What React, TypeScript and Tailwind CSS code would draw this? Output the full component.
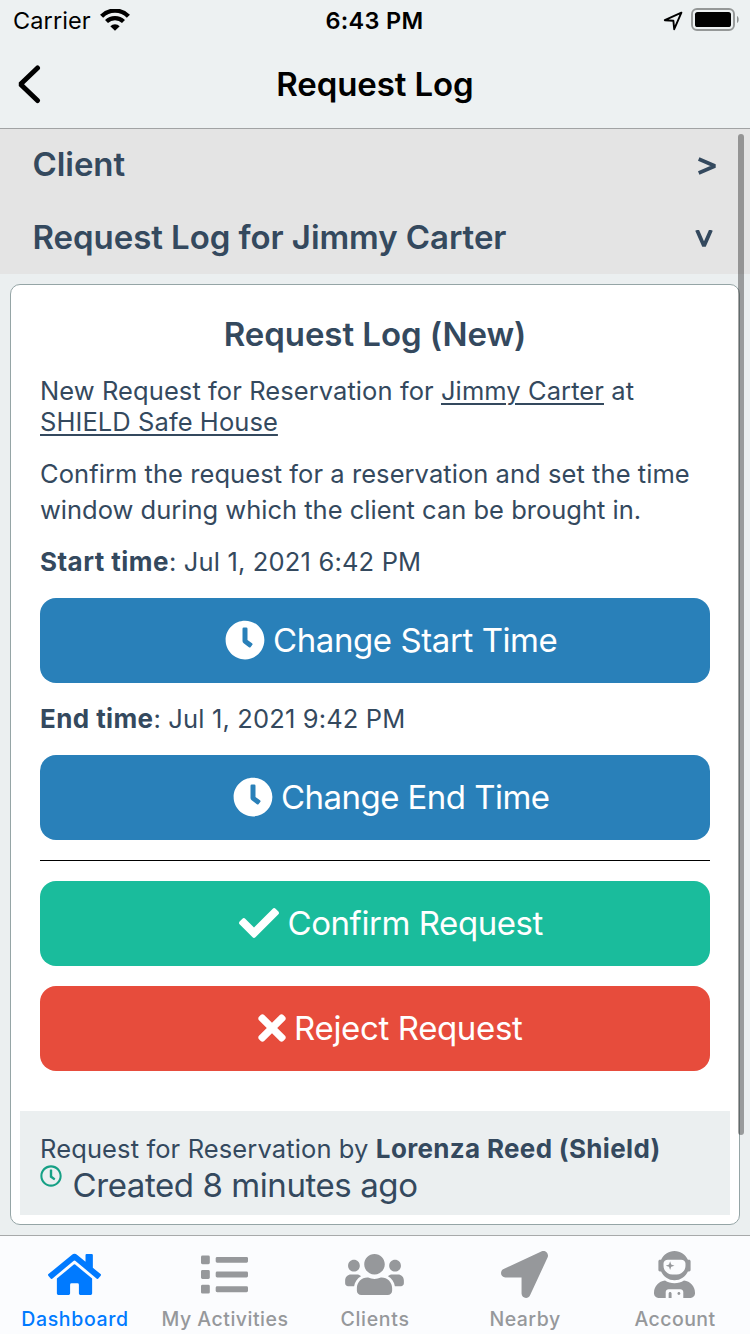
import type { ReactNode } from 'react';
import {
  FaCheck,
  FaClock,
  FaHome,
  FaList,
  FaLocationArrow,
  FaRegClock,
  FaTimes,
  FaUserAstronaut,
  FaUsers,
} from 'react-icons/fa';

function WifiIcon() {
  return (
    <svg className="h-[22px] w-[30px]" viewBox="0 0 30 22" fill="none" stroke="#000">
      <path d="M1.6 7.2a19 19 0 0 1 26.8 0" strokeWidth="4.4" />
      <path d="M6.5 12.6a12 12 0 0 1 17 0" strokeWidth="4.2" />
      <path d="M10.3 17.2a6.8 6.8 0 0 1 9.4 0L15 21.8z" fill="#000" stroke="none" />
    </svg>
  );
}

function BatteryIcon() {
  return (
    <svg className="h-[24px] w-[49px]" viewBox="0 0 49 24">
      <rect x="1" y="1" width="42" height="21" rx="5" fill="none" stroke="#959898" strokeWidth="1.9" />
      <rect x="4" y="4" width="36" height="15" rx="2.6" />
      <path d="M46 8c2.2.6 2.2 6.4 0 7z" fill="#8e9191" />
    </svg>
  );
}

function StatusBar() {
  return (
    <div className="grid h-[40px] grid-cols-3 items-center pl-[13px] text-[23.5px] leading-[38px]">
      <div className="flex items-center gap-[9px]">
        <span className="pt-[2px] tracking-[0.1px]">Carrier</span>
        <WifiIcon />
      </div>
      <div className="pt-[2px] pr-[14px] text-center font-semibold tracking-[0.3px]">6:43 PM</div>
      <div className="flex items-center justify-end gap-[8px] pr-[10px]">
        <svg className="mt-[2px] h-[20px] w-[20px]" viewBox="0 0 20 20" fill="none" stroke="#000" strokeWidth="1.9" strokeLinejoin="round">
          <path d="M18.4 1.6 1.8 9.2 10.4 9.8 11.2 18.2z" />
        </svg>
        <BatteryIcon />
      </div>
    </div>
  );
}

function Header() {
  return (
    <header className="h-[129px] shrink-0 border-b border-[#a1a3a4] bg-[#edf1f2] text-black">
      <StatusBar />
      <div className="grid h-[88px] grid-cols-[60px_1fr_60px] items-center">
        <svg className="ml-[15.5px] h-[40px] w-[26px]" viewBox="0 0 26 40" fill="none" stroke="#000" strokeWidth="5" strokeLinecap="round" strokeLinejoin="bevel">
          <path d="M21.500 4 4.500 20.200 21.500 36.500" />
        </svg>
        <h1 className="pt-[2px] text-center text-[33px] font-semibold tracking-[-0.1px]">Request Log</h1>
      </div>
    </header>
  );
}

function SectionRow({ title, marker }: { title: string; marker: ReactNode }) {
  return (
    <div className="flex h-[73px] items-center justify-between pr-[34px] pb-[2px] pl-[32.5px] text-[33px] font-semibold tracking-[-0.06px]">
      <span>{title}</span>
      {marker}
    </div>
  );
}

function ActionButton({ color, children }: { color: string; children: ReactNode }) {
  return (
    <button className={`flex h-[85px] w-full items-center justify-center gap-[8.5px] rounded-[16px] pl-[32px] text-[33px] text-white ${color}`}>
      {children}
    </button>
  );
}

function Tab({ icon, label, className }: { icon: ReactNode; label: string; className: string }) {
  return (
    <div className={`flex w-[150px] flex-col items-center pt-[15px] text-[19.5px] leading-[24px] font-[450] ${className}`}>
      <div className="mb-[9px] flex h-[47px] items-center pr-[2px]">{icon}</div>
      {label}
    </div>
  );
}

export default function App() {
  return (
    <div className="relative flex h-[1334px] w-[750px] flex-col overflow-hidden bg-[#ebeff0] font-['Inter',sans-serif] text-[#34495e]">
      <Header />

      <div className="h-[145px] shrink-0 bg-[#e4e4e4]">
        <SectionRow
          title="Client"
          marker={
            <svg className="mt-[3px] mr-[-1.5px] h-[18px] w-[20px]" viewBox="0 0 20 18" fill="none" stroke="#34495e" strokeWidth="3.6">
              <path d="M.7 2 17 9 .7 16" strokeLinejoin="bevel" />
            </svg>
          }
        />
        <SectionRow
          title="Request Log for Jimmy Carter"
          marker={
            <svg className="mt-[2px] mr-[3px] h-[18px] w-[18px]" viewBox="0 0 18 18" fill="none" stroke="#34495e" strokeWidth="3.8">
              <path d="M2 0 9 16 16 0" strokeLinejoin="bevel" />
            </svg>
          }
        />
      </div>

      <main className="mx-[10px] mt-[10px] flex h-[941px] shrink-0 flex-col rounded-[10px] border border-[#95a5a6] bg-white text-[25.5px]">
        <div className="px-[29px] pt-[27px]">
          <h2 className="text-center text-[33px] leading-[44px] font-semibold tracking-[-0.05px]">Request Log (New)</h2>
          <p className="mt-[19px] leading-[31px] tracking-[0.08px]">
            New Request for Reservation for{' '}
            <span className="underline decoration-2 underline-offset-[3px]">Jimmy Carter</span> at
            <br />
            <span className="underline decoration-2 underline-offset-[3px]">SHIELD Safe House</span>
          </p>
          <p className="mt-[19px] leading-[36px] whitespace-nowrap tracking-[0.06px]">
            Confirm the request for a reservation and set the time
            <br />
            <span className="tracking-[0px]">window during which the client can be brought in.</span>
          </p>
          <p className="mt-[16px] leading-[36px] tracking-[0.17px]">
            <b className="text-[26px] tracking-[0.46px]">Start time</b>: Jul 1, 2021 6:42 PM
          </p>
          <div className="mt-[18px]">
            <ActionButton color="bg-[#2980b9]">
              <FaClock className="mb-[2px] size-[40px]" />
              <span className="tracking-[-0.42px]">Change Start Time</span>
            </ActionButton>
          </div>
          <p className="mt-[18px] leading-[36px] tracking-[0.15px]">
            <b className="text-[26px] tracking-[0.4px]">End time</b>: Jul 1, 2021 9:42 PM
          </p>
          <div className="mt-[18px]">
            <ActionButton color="bg-[#2980b9]">
              <FaClock className="mb-[2px] size-[40px]" />
              <span className="tracking-[-0.55px]">Change End Time</span>
            </ActionButton>
          </div>
          <hr className="my-[20px] border-t border-black" />
          <div className="flex flex-col gap-[20px]">
            <ActionButton color="bg-[#1abc9c]">
              <FaCheck className="mb-[2px] size-[40px]" />
              <span className="tracking-[-0.43px]">Confirm Request</span>
            </ActionButton>
            <ActionButton color="bg-[#e74c3c]">
              <FaTimes className="mb-[2px] -ml-[2px] h-[40px] w-[28px]" />
              <span className="tracking-[-0.36px]">Reject Request</span>
            </ActionButton>
          </div>
        </div>
        <div className="mx-[9px] mt-[40px] h-[104px] bg-[#ebeff0] px-[20px] pt-[22px]">
          <p className="leading-[32px] whitespace-nowrap tracking-[0.12px]">
            Request for Reservation by <b className="text-[26px] tracking-[0.33px]">Lorenza Reed (Shield)</b>
          </p>
          <div className="flex">
            <FaRegClock className="mr-[10.5px] size-[22px] text-[#16a085]" />
            <span className="text-[33px] leading-[40px] tracking-[-0.42px]">Created 8 minutes ago</span>
          </div>
        </div>
      </main>

      <nav className="mt-[10px] flex h-[99px] shrink-0 border-t border-[#a7a9aa] bg-[#fbfcfe] text-[#96989b]">
        <Tab className="tracking-[0.62px] text-[#007aff]" label="Dashboard" icon={<FaHome className="h-[47px] w-[53px]" />} />
        <Tab className="tracking-[0.5px]" label="My Activities" icon={<FaList className="size-[47px]" />} />
        <Tab className="tracking-[0.7px]" label="Clients" icon={<FaUsers className="h-[47px] w-[59px]" />} />
        <Tab className="tracking-[0.5px]" label="Nearby" icon={<FaLocationArrow className="size-[47px]" />} />
        <Tab className="tracking-[0.45px]" label="Account" icon={<FaUserAstronaut className="h-[47px] w-[41px]" />} />
      </nav>

      <div className="absolute top-[134px] right-[6px] h-[1001px] w-[6px] rounded-full bg-black/35" />
    </div>
  );
}
